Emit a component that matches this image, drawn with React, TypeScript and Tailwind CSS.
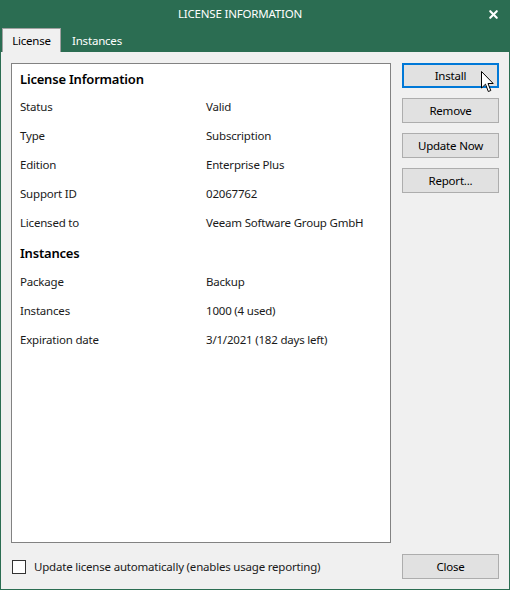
import { X } from "lucide-react";

type Row = { label: string; value: string };

const licenseRows: Row[] = [
  { label: "Status", value: "Valid" },
  { label: "Type", value: "Subscription" },
  { label: "Edition", value: "Enterprise Plus" },
  { label: "Support ID", value: "02067762" },
  { label: "Licensed to", value: "Veeam Software Group GmbH" },
];

const instanceRows: Row[] = [
  { label: "Package", value: "Backup" },
  { label: "Instances", value: "1000 (4 used)" },
  { label: "Expiration date", value: "3/1/2021 (182 days left)" },
];

const InfoRow = (props: Row) => {
  return (
    <div className="flex h-[29px] items-center">
      <div className="w-[186px]">{props.label}</div>
      <div>{props.value}</div>
    </div>
  );
};

const DialogButton = (props: { label: string; focused?: boolean }) => {
  return (
    <div
      className={
        props.focused
          ? "flex h-[25px] w-[97px] items-center justify-center border-2 border-[#0078d7] bg-[#e1e1e1] text-black"
          : "flex h-[25px] w-[97px] items-center justify-center border border-[#adadad] bg-[#e1e1e1] text-black"
      }
    >
      {props.label}
    </div>
  );
};

const Cursor = () => {
  return (
    <svg
      className="absolute left-[79px] top-[8px]"
      width="13"
      height="22"
      viewBox="0 0 13 22"
    >
      <path
        d="M0.5 0.5 L0.5 17 L4.5 13.2 L7.3 20.5 L9.8 19.5 L7 12.5 L12.2 12.5 Z"
        fill="white"
        stroke="black"
        strokeWidth="1"
        strokeLinejoin="miter"
      />
    </svg>
  );
};

export default function App() {
  return (
    <div
      className="flex h-[590px] w-[510px] flex-col bg-[#2b6d52] px-[1px] pb-[1px] text-[11.5px] tracking-[-0.2px] text-[#1a1a1a]"
      style={{ fontFamily: '"Segoe UI", "Noto Sans", sans-serif' }}
    >
      <div className="relative flex h-[29px] items-center justify-center pr-[30px] text-white">
        <span className="pb-[1px]">LICENSE INFORMATION</span>
        <X className="absolute right-[9px] top-[8px] h-[13px] w-[13px]" strokeWidth={4} />
      </div>
      <div className="flex h-[23px] items-end">
        <div className="ml-[1px] flex h-[24px] w-[59px] items-center justify-center border border-b-0 border-[#a0a0a0] bg-[#f0f0f0] text-black">
          License
        </div>
        <div className="flex h-[23px] w-[72px] items-center justify-center text-white">
          Instances
        </div>
      </div>
      <div className="flex flex-1 flex-col bg-[#f0f0f0] px-[10px] pt-[11px] pb-[10px]">
        <div className="flex flex-1 gap-[11px]">
          <div className="flex w-[380px] flex-col border border-[#828282] bg-white pl-[8px]">
            <div className="flex h-[28px] items-center pt-[3px] text-[13px] font-semibold text-black">
              License Information
            </div>
            {licenseRows.map((row) => (
              <InfoRow key={row.label} label={row.label} value={row.value} />
            ))}
            <div className="flex h-[30px] items-center pt-[3px] text-[13px] font-semibold text-black">
              Instances
            </div>
            {instanceRows.map((row) => (
              <InfoRow key={row.label} label={row.label} value={row.value} />
            ))}
          </div>
          <div className="relative flex flex-col gap-[10px]">
            <DialogButton label="Install" focused />
            <DialogButton label="Remove" />
            <DialogButton label="Update Now" />
            <DialogButton label="Report..." />
            <Cursor />
          </div>
        </div>
        <div className="mt-[11px] flex items-center justify-between">
          <div className="flex items-center gap-[8px] pl-[1px]">
            <div className="h-[14px] w-[14px] border border-[#333333] bg-white" />
            <span>Update license automatically (enables usage reporting)</span>
          </div>
          <DialogButton label="Close" />
        </div>
      </div>
    </div>
  );
}
